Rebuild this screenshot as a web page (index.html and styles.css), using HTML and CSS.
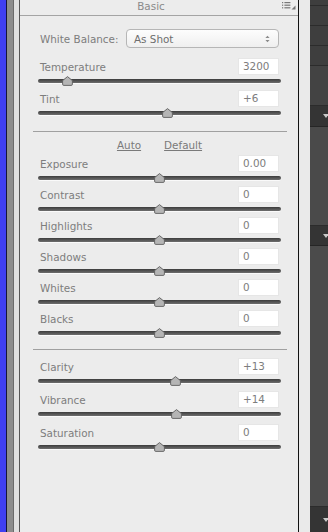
FILE: index.html
```html
<!DOCTYPE html>
<html>
<head>
<meta charset="utf-8">
<title>Basic</title>
<link rel="stylesheet" href="styles.css">
</head>
<body>
<div class="edge-blue"></div>
<div class="edge-gray"></div>
<div class="edge-light"></div>
<section class="panel">
  <header class="panel-head">
    <span class="panel-title">Basic</span>
    <svg class="panel-menu" viewBox="0 0 14 9" aria-hidden="true">
      <rect x="0" y="1" width="1.2" height="1.2"/>
      <rect x="0" y="3.6" width="1.2" height="1.2"/>
      <rect x="0" y="6.2" width="1.2" height="1.2"/>
      <rect x="2.4" y="1" width="6" height="1.2"/>
      <rect x="2.4" y="3.6" width="6" height="1.2"/>
      <rect x="2.4" y="6.2" width="6" height="1.2"/>
      <path d="M13.5 4.5 V8.5 H9.5 Z"/>
    </svg>
  </header>
  <div class="panel-body">
    <div class="wb-row">
      <span class="label">White Balance:</span>
      <div class="select">
        <span>As Shot</span>
        <svg class="select-arrows" viewBox="0 0 6 9" aria-hidden="true">
          <path d="M0.5 3.4 L3 0.6 L5.5 3.4 Z"/>
          <path d="M0.5 5.6 L3 8.4 L5.5 5.6 Z"/>
        </svg>
      </div>
    </div>

    <div class="group group-wb">
      <div class="slider">
        <div class="slider-top"><span class="label">Temperature</span><span class="value">3200</span></div>
        <div class="track"><svg class="thumb" style="left:12.3%" viewBox="0 0 11 10"><path d="M5.5 0.6 L10.4 4.6 V8.2 Q10.4 9.4 9.2 9.4 H1.8 Q0.6 9.4 0.6 8.2 V4.6 Z"/></svg></div>
      </div>
      <div class="slider">
        <div class="slider-top"><span class="label">Tint</span><span class="value">+6</span></div>
        <div class="track"><svg class="thumb" style="left:53.1%" viewBox="0 0 11 10"><path d="M5.5 0.6 L10.4 4.6 V8.2 Q10.4 9.4 9.2 9.4 H1.8 Q0.6 9.4 0.6 8.2 V4.6 Z"/></svg></div>
      </div>
    </div>

    <hr class="divider">

    <div class="tone-links"><a class="link">Auto</a><a class="link">Default</a></div>

    <div class="group group-tone">
      <div class="slider">
        <div class="slider-top"><span class="label">Exposure</span><span class="value">0.00</span></div>
        <div class="track"><svg class="thumb" style="left:50.2%" viewBox="0 0 11 10"><path d="M5.5 0.6 L10.4 4.6 V8.2 Q10.4 9.4 9.2 9.4 H1.8 Q0.6 9.4 0.6 8.2 V4.6 Z"/></svg></div>
      </div>
      <div class="slider">
        <div class="slider-top"><span class="label">Contrast</span><span class="value">0</span></div>
        <div class="track"><svg class="thumb" style="left:50.2%" viewBox="0 0 11 10"><path d="M5.5 0.6 L10.4 4.6 V8.2 Q10.4 9.4 9.2 9.4 H1.8 Q0.6 9.4 0.6 8.2 V4.6 Z"/></svg></div>
      </div>
      <div class="slider">
        <div class="slider-top"><span class="label">Highlights</span><span class="value">0</span></div>
        <div class="track"><svg class="thumb" style="left:50.2%" viewBox="0 0 11 10"><path d="M5.5 0.6 L10.4 4.6 V8.2 Q10.4 9.4 9.2 9.4 H1.8 Q0.6 9.4 0.6 8.2 V4.6 Z"/></svg></div>
      </div>
      <div class="slider">
        <div class="slider-top"><span class="label">Shadows</span><span class="value">0</span></div>
        <div class="track"><svg class="thumb" style="left:50.2%" viewBox="0 0 11 10"><path d="M5.5 0.6 L10.4 4.6 V8.2 Q10.4 9.4 9.2 9.4 H1.8 Q0.6 9.4 0.6 8.2 V4.6 Z"/></svg></div>
      </div>
      <div class="slider">
        <div class="slider-top"><span class="label">Whites</span><span class="value">0</span></div>
        <div class="track"><svg class="thumb" style="left:50.2%" viewBox="0 0 11 10"><path d="M5.5 0.6 L10.4 4.6 V8.2 Q10.4 9.4 9.2 9.4 H1.8 Q0.6 9.4 0.6 8.2 V4.6 Z"/></svg></div>
      </div>
      <div class="slider">
        <div class="slider-top"><span class="label">Blacks</span><span class="value">0</span></div>
        <div class="track"><svg class="thumb" style="left:50.2%" viewBox="0 0 11 10"><path d="M5.5 0.6 L10.4 4.6 V8.2 Q10.4 9.4 9.2 9.4 H1.8 Q0.6 9.4 0.6 8.2 V4.6 Z"/></svg></div>
      </div>
    </div>

    <hr class="divider divider-presence">

    <div class="group group-presence">
      <div class="slider">
        <div class="slider-top"><span class="label">Clarity</span><span class="value">+13</span></div>
        <div class="track"><svg class="thumb" style="left:56.4%" viewBox="0 0 11 10"><path d="M5.5 0.6 L10.4 4.6 V8.2 Q10.4 9.4 9.2 9.4 H1.8 Q0.6 9.4 0.6 8.2 V4.6 Z"/></svg></div>
      </div>
      <div class="slider">
        <div class="slider-top"><span class="label">Vibrance</span><span class="value">+14</span></div>
        <div class="track"><svg class="thumb" style="left:57.2%" viewBox="0 0 11 10"><path d="M5.5 0.6 L10.4 4.6 V8.2 Q10.4 9.4 9.2 9.4 H1.8 Q0.6 9.4 0.6 8.2 V4.6 Z"/></svg></div>
      </div>
      <div class="slider">
        <div class="slider-top"><span class="label">Saturation</span><span class="value">0</span></div>
        <div class="track"><svg class="thumb" style="left:50.2%" viewBox="0 0 11 10"><path d="M5.5 0.6 L10.4 4.6 V8.2 Q10.4 9.4 9.2 9.4 H1.8 Q0.6 9.4 0.6 8.2 V4.6 Z"/></svg></div>
      </div>
    </div>
  </div>
</section>
<div class="gutter"></div>
<aside class="dock">
  <div class="dock-seg dock-top"></div>
  <div class="dock-seg dock-row"></div>
  <div class="dock-seg dock-row"></div>
  <div class="dock-seg dock-row"></div>
  <div class="dock-seg dock-mid"></div>
  <div class="dock-band dock-band-1"><span class="caret"></span></div>
  <div class="dock-seg dock-fill-1"></div>
  <div class="dock-band dock-band-2"><span class="caret"></span></div>
  <div class="dock-seg dock-fill-2"></div>
  <div class="dock-band dock-band-3"><span class="caret"></span></div>
</aside>
</body>
</html>
```

FILE: styles.css
```css
* {
  box-sizing: border-box;
}

html, body {
  margin: 0;
  padding: 0;
}

body {
  width: 328px;
  height: 532px;
  overflow: hidden;
  display: flex;
  font-family: "DejaVu Sans", "Noto Sans", sans-serif;
  font-size: 10.4px;
  color: #7d7d7d;
  background: #ececec;
}

/* left edges */
.edge-blue {
  width: 7px;
  background: #3f3ff2;
  border-right: 1px solid #15153a;
}

.edge-gray {
  width: 7px;
  background: #8d8d8d;
  border-right: 1px solid #6b6b6b;
}

.edge-light {
  width: 5px;
  background: #e0e0e0;
}

/* panel */
.panel {
  width: 280px;
  background: #ececec;
  border-left: 1px solid #555;
  border-right: 1px solid #121212;
  display: flex;
  flex-direction: column;
}

.panel-head {
  height: 16px;
  border-bottom: 1px solid #a4a4a4;
  display: flex;
  align-items: flex-start;
}

.panel-title {
  flex: 1;
  text-align: center;
  line-height: 13px;
  color: #8a8a8a;
}

.panel-menu {
  width: 14px;
  height: 9px;
  margin: 1px 2px 0 0;
  fill: #777;
}

.panel-body {
  padding: 13px 19px 0 20px;
  display: flex;
  flex-direction: column;
}

.label {
  white-space: nowrap;
}

.wb-row {
  height: 19px;
  display: flex;
  align-items: center;
  justify-content: space-between;
}

.select {
  width: 153px;
  height: 19px;
  border: 1px solid #b6b6b6;
  border-radius: 4px;
  background: linear-gradient(#fdfdfd, #efefef);
  display: flex;
  align-items: center;
  justify-content: space-between;
  padding: 0 8px 0 7px;
  color: #6e6e6e;
}

.select-arrows {
  width: 5px;
  height: 8px;
  fill: #8a8a8a;
}

/* slider groups */
.group {
  display: flex;
  flex-direction: column;
}

.group-wb {
  margin-top: 10px;
  gap: 4px;
}

.group-tone {
  margin-top: 3px;
  gap: 3px;
}

.group-presence {
  margin-top: 8px;
  gap: 5px;
}

.slider {
  display: flex;
  flex-direction: column;
}

.slider-top {
  height: 17px;
  display: flex;
  align-items: center;
  justify-content: space-between;
}

.value {
  width: 41px;
  height: 17px;
  background: #fff;
  border: 1px solid #e6e6e6;
  padding-left: 4px;
  line-height: 15px;
  color: #7d7d7d;
}

.track {
  position: relative;
  height: 10px;
  margin: 1px -2px 0 -2px;
}

.track::before {
  content: "";
  position: absolute;
  left: 0;
  right: 0;
  top: 3px;
  height: 4px;
  border-radius: 2px;
  background: linear-gradient(#3c3c3c, #6e6e6e);
  box-shadow: 0 1px 0 #fafafa;
}

.thumb {
  position: absolute;
  top: 0;
  width: 11px;
  height: 10px;
  margin-left: -5.5px;
  fill: #b5b5b5;
  stroke: #5e5e5e;
  stroke-width: 0.9;
}

/* dividers and links */
.divider {
  border: 0;
  border-top: 1px solid #a0a0a0;
  height: 0;
  margin: 13px -8px 0 -7px;
}

.divider-presence {
  margin-top: 11px;
}

.tone-links {
  display: flex;
  justify-content: center;
  gap: 23px;
  margin-top: 6px;
  line-height: 14px;
}

.link {
  color: #7a7a7a;
  text-decoration: underline;
}

/* right side */
.gutter {
  width: 11px;
  background: #eaeaea;
}

.dock {
  width: 18px;
  display: flex;
  flex-direction: column;
  background: #484848;
}

.dock-seg {
  border-bottom: 1px solid #2c2c2c;
}

.dock-top {
  height: 6px;
  background: #3e3e3e;
}

.dock-row {
  height: 20px;
  background: #3e3e3e;
}

.dock-mid {
  height: 40px;
  background: #434343;
}

.dock-band {
  display: flex;
  align-items: center;
  justify-content: flex-end;
  background: #343434;
  border-bottom: 1px solid #262626;
}

.dock-band-1 {
  height: 21px;
}

.dock-fill-1 {
  height: 99px;
  background: #4a4a4a;
}

.dock-band-2 {
  height: 20px;
}

.dock-fill-2 {
  height: 261px;
  background: #4b4b4b;
}

.dock-band-3 {
  flex: 1;
  border-bottom: 0;
}

.caret {
  width: 0;
  height: 0;
  border-left: 3px solid transparent;
  border-right: 3px solid transparent;
  border-top: 4px solid #c8c8c8;
  margin-right: -1px;
}
```
